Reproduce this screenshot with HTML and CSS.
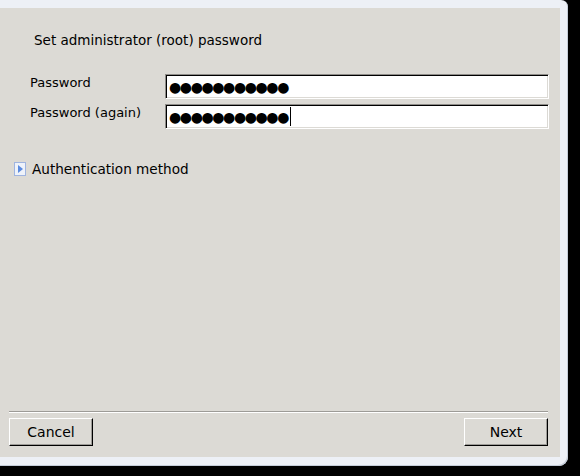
FILE: index.html
```html
<!DOCTYPE html>
<html>
<head>
<meta charset="utf-8">
<link rel="stylesheet" href="styles.css">
</head>
<body>
<div class="window">
  <div class="panel">
    <div class="title">Set administrator (root) password</div>
    <div class="form">
      <div class="row">
        <div class="label">Password</div>
        <div class="entry"><span class="dots">●●●●●●●●●●●</span></div>
      </div>
      <div class="row">
        <div class="label">Password (again)</div>
        <div class="entry"><span class="dots">●●●●●●●●●●●</span><span class="cursor"></span></div>
      </div>
    </div>
    <div class="expander">
      <svg class="arrow" width="12" height="14" viewBox="0 0 12 14">
        <rect x="0.5" y="0.5" width="11" height="13" fill="#eef2fa" stroke="#9fb4e0"/>
        <path d="M4 3 L9 7 L4 11 Z" fill="#5b8be0"/>
      </svg>
      <span>Authentication method</span>
    </div>
    <div class="spacer"></div>
    <div class="separator"></div>
    <div class="buttons">
      <div class="button">Cancel</div>
      <div class="button">Next</div>
    </div>
  </div>
</div>
</body>
</html>
```
FILE: styles.css
```css
html, body {
  margin: 0;
  padding: 0;
  background: #000;
  width: 580px;
  height: 476px;
  overflow: hidden;
}
.window {
  width: 560px;
  height: 449px;
  padding: 8px 8px 9px 0;
  background: #edf0f6;
  border-bottom-right-radius: 9px;
  border-top-right-radius: 7px;
  box-shadow: inset -1px -1px 0 #c4ccd8;
  font-family: "DejaVu Sans", sans-serif;
  font-size: 13px;
  color: #000;
}
.panel {
  height: 449px;
  background: #dcdad5;
  display: flex;
  flex-direction: column;
  box-sizing: border-box;
  padding: 24px 12px 11px 9px;
}
.title {
  padding-left: 25px;
  line-height: 16px;
  font-size: 13.5px;
}
.form {
  margin-top: 26px;
  display: flex;
  flex-direction: column;
  gap: 5px;
}
.row {
  display: flex;
  padding-left: 21px;
  margin-right: -1px;
}
.label {
  width: 135px;
  flex-shrink: 0;
  line-height: 16px;
  padding-top: 1px;
}
.entry {
  flex: 1;
  height: 23px;
  background: #fff;
  border: 1px solid;
  border-color: #8e8c88 #fff #fff #8e8c88;
  box-shadow: inset 1px 1px 0 #000, inset -1px -1px 0 #dcdad5;
  display: flex;
  align-items: center;
  padding-left: 3px;
}
.dots {
  font-size: 14px;
  letter-spacing: -1.4px;
  line-height: 16px;
}
.cursor {
  display: inline-block;
  width: 1px;
  height: 19px;
  background: #000;
  margin-left: 2px;
}
.expander {
  margin-top: 32px;
  display: flex;
  align-items: center;
  gap: 6px;
  padding-left: 5px;
  line-height: 16px;
  font-size: 13.6px;
}
.arrow {
  display: block;
}
.spacer {
  flex: 1;
}
.separator {
  height: 1px;
  background: #9d9b97;
  border-bottom: 1px solid #fff;
  margin-bottom: 5px;
}
.buttons {
  display: flex;
  justify-content: space-between;
}
.button {
  width: 82px;
  height: 26px;
  border: 1px solid;
  border-color: #fff #000 #000 #fff;
  box-shadow: inset -1px -1px 0 #9d9b97;
  display: flex;
  align-items: center;
  justify-content: center;
  font-size: 14px;
}
```
